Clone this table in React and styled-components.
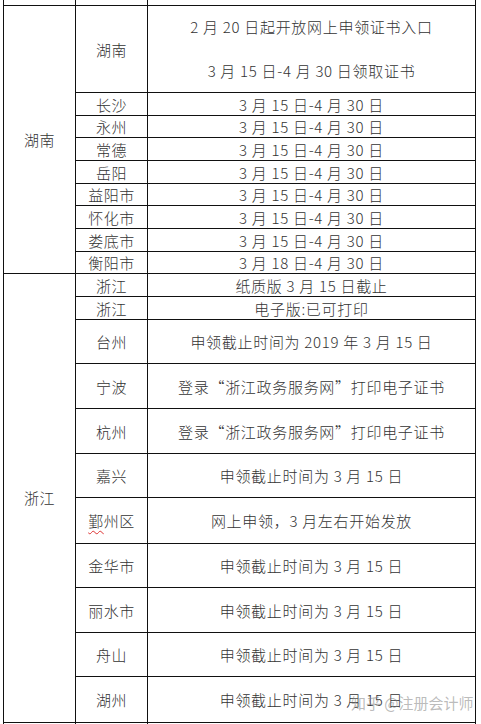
import React from "react";
import styled, { createGlobalStyle } from "styled-components";

const GlobalStyle = createGlobalStyle`
  html, body {
    margin: 0;
    padding: 0;
    background: #ffffff;
  }
  body {
    font-family: "Noto Sans CJK SC", "Noto Sans", sans-serif;
    color: #333;
  }
`;

const Page = styled.div`
  position: relative;
  width: 481px;
  height: 724px;
  overflow: hidden;
  background: #fff;
`;

const Sheet = styled.div`
  margin-left: 3px;
  width: 473px;
  box-sizing: border-box;
  border-left: 1px solid #111;
  border-right: 1px solid #111;
  display: flex;
  flex-direction: column;
`;

const Stub = styled.div`
  display: flex;
  height: ${(p) => p.h}px;
  box-sizing: border-box;
  border-bottom: ${(p) => (p.$line ? "1px solid #111" : "none")};
`;

const StubCell = styled.div`
  width: 72px;
  flex: none;
  box-sizing: border-box;
  border-right: 1px solid #111;
`;

const Group = styled.div`
  display: flex;
  align-items: stretch;
`;

const Province = styled.div`
  width: 72px;
  flex: none;
  box-sizing: border-box;
  border-right: 1px solid #111;
  border-bottom: 1px solid #111;
  display: flex;
  align-items: center;
  justify-content: center;
  font-size: 15px;
  font-weight: 300;
  letter-spacing: 0.5px;
  padding-bottom: 1px;
`;

const Rows = styled.div`
  flex: 1;
  display: flex;
  flex-direction: column;
`;

const Row = styled.div`
  display: flex;
  height: ${(p) => p.h}px;
  box-sizing: border-box;
  border-bottom: 1px solid #111;
`;

const City = styled.div`
  width: 72px;
  flex: none;
  box-sizing: border-box;
  border-right: 1px solid #111;
  display: flex;
  align-items: center;
  justify-content: center;
  font-size: 15px;
  font-weight: 300;
  letter-spacing: 0.5px;
  line-height: 1;
  white-space: nowrap;
`;

const Info = styled.div`
  flex: 1;
  display: flex;
  flex-direction: column;
  align-items: center;
  justify-content: center;
  font-size: 15px;
  font-weight: 300;
  letter-spacing: 0.7px;
  line-height: ${(p) => (p.$tall ? "44px" : "1")};
  white-space: pre;
  text-align: center;
`;

const Squiggle = styled.span`
  text-decoration-line: underline;
  text-decoration-style: wavy;
  text-decoration-color: #d33;
  text-decoration-thickness: 1px;
  text-underline-offset: 3px;
`;

const Watermark = styled.div`
  position: absolute;
  left: 351px;
  top: 694px;
  font-size: 15px;
  line-height: 18px;
  color: rgba(130, 130, 130, 0.55);
  white-space: pre;
  pointer-events: none;
`;

const hunan = [
  { c: "长沙", t: "3 月 15 日-4 月 30 日", h: 23 },
  { c: "永州", t: "3 月 15 日-4 月 30 日", h: 22 },
  { c: "常德", t: "3 月 15 日-4 月 30 日", h: 23 },
  { c: "岳阳", t: "3 月 15 日-4 月 30 日", h: 23 },
  { c: "益阳市", t: "3 月 15 日-4 月 30 日", h: 22 },
  { c: "怀化市", t: "3 月 15 日-4 月 30 日", h: 23 },
  { c: "娄底市", t: "3 月 15 日-4 月 30 日", h: 23 },
  { c: "衡阳市", t: "3 月 18 日-4 月 30 日", h: 22 },
];

const zhejiang = [
  { c: "浙江", t: "纸质版 3 月 15 日截止", h: 23 },
  { c: "浙江", t: "电子版:已可打印", h: 23 },
  { c: "台州", t: "申领截止时间为 2019 年 3 月 15 日", h: 44 },
  { c: "宁波", t: "登录“浙江政务服务网”打印电子证书", h: 45 },
  { c: "杭州", t: "登录“浙江政务服务网”打印电子证书", h: 45 },
  { c: "嘉兴", t: "申领截止时间为 3 月 15 日", h: 44 },
  { c: <><Squiggle>鄞</Squiggle>州区</>, t: "网上申领，3 月左右开始发放", h: 46 },
  { c: "金华市", t: "申领截止时间为 3 月 15 日", h: 44 },
  { c: "丽水市", t: "申领截止时间为 3 月 15 日", h: 45 },
  { c: "舟山", t: "申领截止时间为 3 月 15 日", h: 44 },
  { c: "湖州", t: "申领截止时间为 3 月 15 日", h: 46 },
];

export default function App() {
  return (
    <Page>
      <GlobalStyle />
      <Sheet>
        <Stub h={6} $line>
          <StubCell />
          <StubCell />
        </Stub>
        <Group>
          <Province>湖南</Province>
          <Rows>
            <Row h={87}>
              <City>湖南</City>
              <Info $tall>
                <span>2 月 20 日起开放网上申领证书入口</span>
                <span>3 月 15 日-4 月 30 日领取证书</span>
              </Info>
            </Row>
            {hunan.map((r, i) => (
              <Row key={i} h={r.h}>
                <City>{r.c}</City>
                <Info>{r.t}</Info>
              </Row>
            ))}
          </Rows>
        </Group>
        <Group>
          <Province>浙江</Province>
          <Rows>
            {zhejiang.map((r, i) => (
              <Row key={i} h={r.h}>
                <City>{r.c}</City>
                <Info>{r.t}</Info>
              </Row>
            ))}
          </Rows>
        </Group>
        <Stub h={20}>
          <StubCell />
          <StubCell />
        </Stub>
      </Sheet>
      <Watermark>知乎 @注册会计师</Watermark>
    </Page>
  );
}
